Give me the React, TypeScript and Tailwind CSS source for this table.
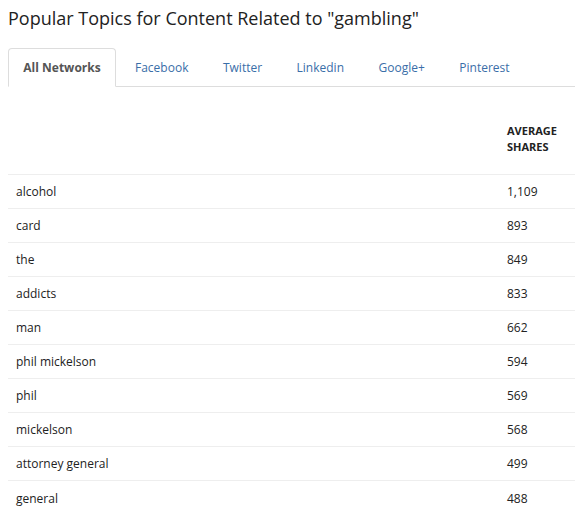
import React from "react";

const rows: [string, string][] = [
  ["alcohol", "1,109"],
  ["card", "893"],
  ["the", "849"],
  ["addicts", "833"],
  ["man", "662"],
  ["phil mickelson", "594"],
  ["phil", "569"],
  ["mickelson", "568"],
  ["attorney general", "499"],
  ["general", "488"],
];

const tabs = ["Facebook", "Twitter", "Linkedin", "Google+", "Pinterest"];

export default function App() {
  return (
    <div
      className="w-[575px] h-[525px] overflow-hidden bg-white pl-2 text-[#333]"
      style={{ fontFamily: '"Open Sans", sans-serif' }}
    >
      <h1 className="pt-[5px] h-[48px] text-[18px] leading-[26px] font-normal text-[#222]">
        Popular Topics for Content Related to "gambling"
      </h1>
      <div className="flex h-[39px] border-b border-[#ddd] text-[12px] whitespace-nowrap">
        <div className="-mb-px h-[39px] flex items-center justify-center border border-[#ddd] border-b-white rounded-t-[4px] bg-white font-bold text-[#555] mr-[3px] w-[108px] pt-px">
          All Networks
        </div>
        {tabs.map((t) => (
          <div key={t} className="px-4 flex items-center text-[#3a6ea8] mr-[2.5px] pt-px">
            {t}
          </div>
        ))}
      </div>
      <div className="flex h-[88px] border-b border-[#eee] items-end pb-[19px]">
        <div className="flex-1" />
        <div className="w-[68px] text-[11px] leading-[16px] font-bold text-[#222] uppercase">
          Average
          <br />
          Shares
        </div>
      </div>
      {rows.map(([k, v]) => (
        <div key={k} className="flex h-[34px] border-b border-[#eee] last:border-b-0 items-center pt-px text-[12px] text-[#222]">
          <div className="flex-1 pl-2">{k}</div>
          <div className="w-[68px]">{v}</div>
        </div>
      ))}
    </div>
  );
}
